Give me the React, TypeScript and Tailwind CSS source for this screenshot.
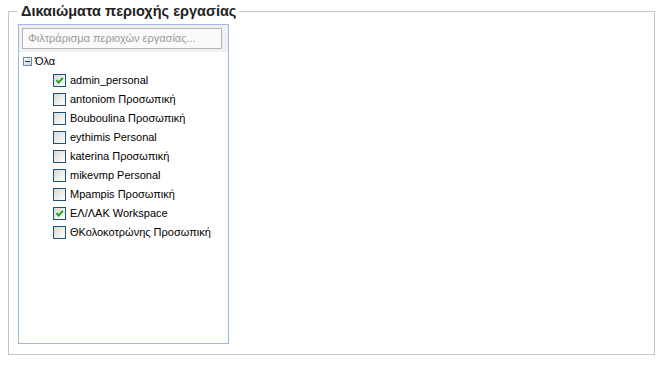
import React from 'react';

type Node = { label: string; checked: boolean };

const nodes: Node[] = [
  { label: 'admin_personal', checked: true },
  { label: 'antoniom Προσωπική', checked: false },
  { label: 'Bouboulina Προσωπική', checked: false },
  { label: 'eythimis Personal', checked: false },
  { label: 'katerina Προσωπική', checked: false },
  { label: 'mikevmp Personal', checked: false },
  { label: 'Mpampis Προσωπική', checked: false },
  { label: 'ΕΛ/ΛΑΚ Workspace', checked: true },
  { label: 'ΘΚολοκοτρώνης Προσωπική', checked: false },
];

function CheckBox({ checked }: { checked: boolean }) {
  return (
    <span className="relative w-[13px] h-[13px] border border-[#1c5180] bg-gradient-to-br from-[#d8d8d2] to-white shrink-0">
      {checked && (
        <svg viewBox="0 0 11 11" className="absolute inset-0 w-[11px] h-[11px]">
          <path d="M2.5 5.2 L4.6 7.6 L8.8 2.8" fill="none" stroke="#21a121" strokeWidth="2" />
        </svg>
      )}
    </span>
  );
}

function MinusIcon() {
  return (
    <span className="relative w-[9px] h-[9px] border border-[#6d87a5] bg-gradient-to-br from-white to-[#c9d3df] shrink-0">
      <span className="absolute left-[1px] top-[3px] w-[5px] h-px bg-[#23364f]" />
    </span>
  );
}

export default function App() {
  return (
    <div className="w-[669px] h-[366px] bg-white pt-[2px] pl-2" style={{ fontFamily: '"Liberation Sans", Arial, sans-serif' }}>
      <fieldset className="w-[647px] h-[353px] border border-[#c6c6c6] pl-[9px] pr-2">
        <legend className="px-[3px] text-[14.5px] leading-[18px] font-bold text-[#222]">
          Δικαιώματα περιοχής εργασίας
        </legend>
        <div className="mt-[4px] w-[211px] h-[320px] border border-[#99bbe8] bg-white">
          <div className="h-[27px] bg-[#f0f0f0] pt-[3px] pl-[3px]">
            <div className="w-[200px] h-[21px] border border-[#b5b5b5] bg-[#fafafa] flex items-center pl-[5px] text-[11px] text-[#999]">
              Φιλτράρισμα περιοχών εργασίας...
            </div>
          </div>
          <div className="flex flex-col text-[11px] text-black">
            <div className="h-[19px] flex items-center pl-[4px] gap-[3px]">
              <MinusIcon />
              <span>Όλα</span>
            </div>
            {nodes.map((n) => (
              <div key={n.label} className="h-[19px] flex items-center pl-[34px] gap-[4px]">
                <CheckBox checked={n.checked} />
                <span>{n.label}</span>
              </div>
            ))}
          </div>
        </div>
      </fieldset>
    </div>
  );
}
